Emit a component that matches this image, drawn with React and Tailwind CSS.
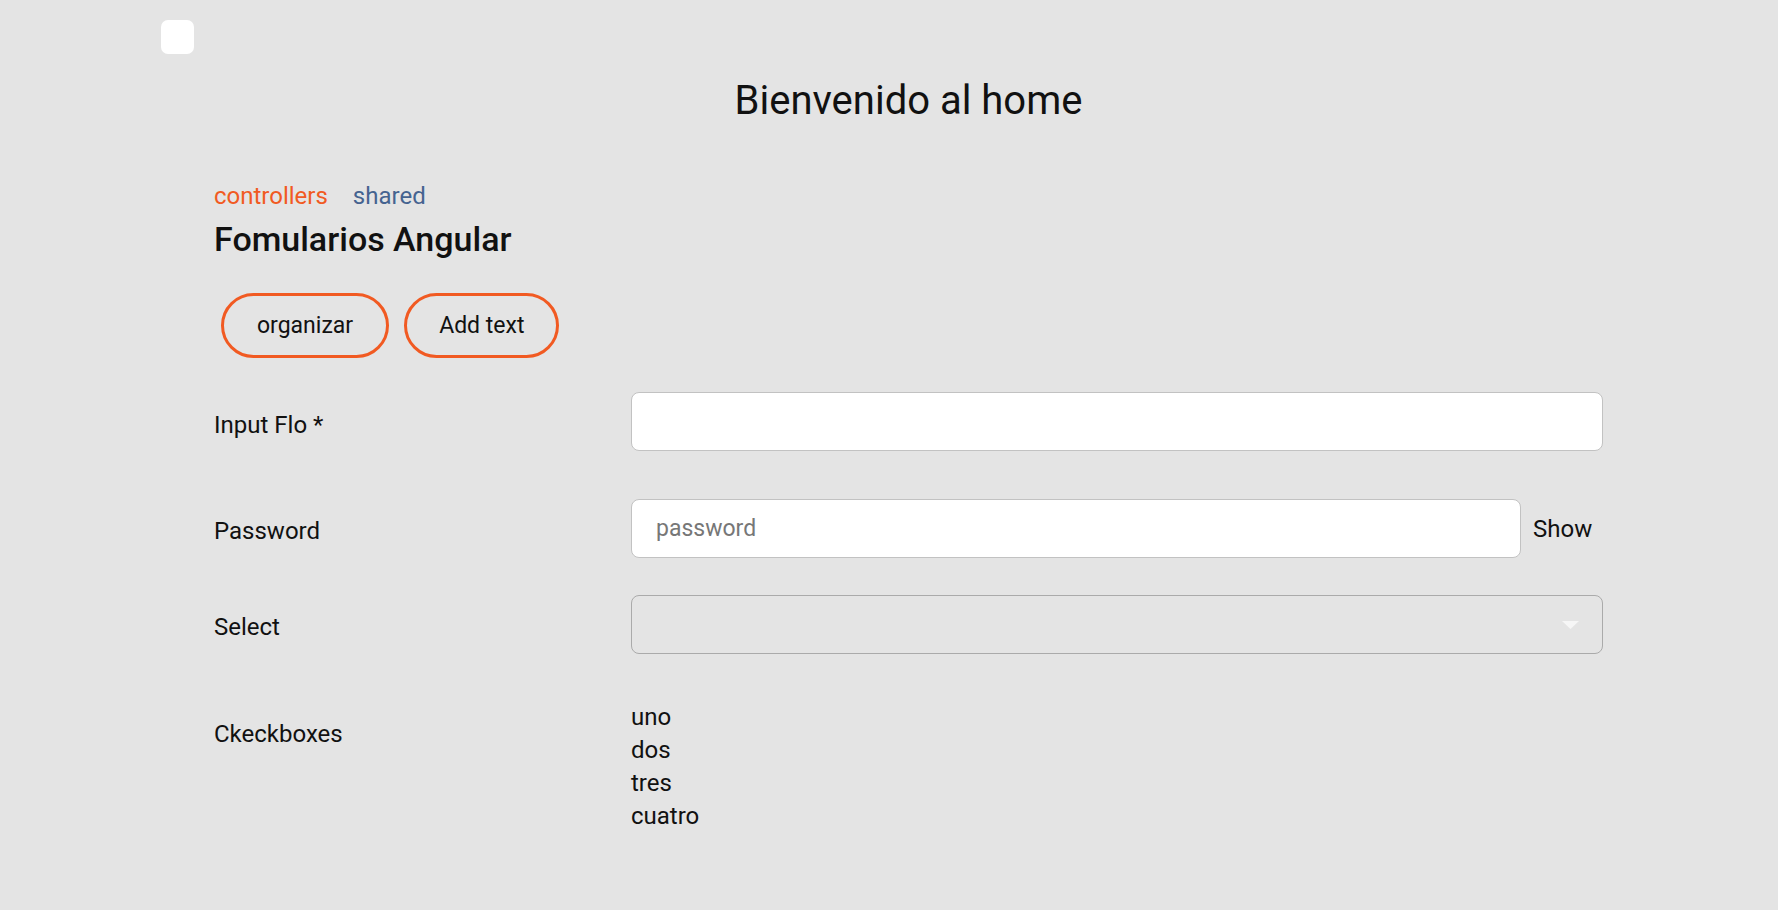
export default function App() {
  const items = ["uno", "dos", "tres", "cuatro"];
  return (
    <div className="min-h-[910px] w-full bg-[#e4e4e4] text-[#111] font-['Roboto',sans-serif]">
      <div className="pl-[161px] pt-[20px]">
        <div className="h-[34px] w-[33px] rounded-[7px] bg-white" />
      </div>
      <div className="ml-[214px] w-[1389px]">
        <h1 className="mt-[23px] text-center text-[40px] leading-[47px] font-normal">
          Bienvenido al home
        </h1>
        <div className="mt-[58px] flex gap-[25px] text-[24px] leading-[28px]">
          <a className="text-[#f15a22]">controllers</a>
          <a className="text-[#456390]">shared</a>
        </div>
        <h2 className="mt-[9px] text-[34px] leading-[40px] font-medium">Fomularios Angular</h2>
        <div className="mt-[34px] ml-[7px] flex gap-[15px]">
          <button className="h-[65px] rounded-full border-[3px] border-[#f15a22] px-[33px] text-[23px] leading-[28px]">
            organizar
          </button>
          <button className="h-[65px] rounded-full border-[3px] border-[#f15a22] px-[32px] text-[23px] leading-[28px]">
            Add text
          </button>
        </div>

        <div className="mt-[34px] flex items-start">
          <label className="mt-[19px] w-[417px] text-[24px] leading-[28px]">Input Flo *</label>
          <input className="h-[59px] flex-1 rounded-[8px] border border-[#c2c2c2] bg-white px-6 text-[24px] outline-none" />
        </div>

        <div className="mt-[48px] flex items-start">
          <label className="mt-[18px] w-[417px] text-[24px] leading-[28px]">Password</label>
          <div className="flex flex-1 items-center gap-[12px]">
            <input
              type="password"
              placeholder="password"
              className="h-[59px] w-[890px] rounded-[8px] border border-[#c2c2c2] bg-white px-6 text-[23px] outline-none placeholder:text-[#777]"
            />
            <span className="text-[24px] leading-[28px]">Show</span>
          </div>
        </div>

        <div className="mt-[37px] flex items-start">
          <label className="mt-[18px] w-[417px] text-[24px] leading-[28px]">Select</label>
          <div className="flex h-[59px] flex-1 items-center justify-end rounded-[8px] border border-[#aaaaaa] pr-[23px]">
            <svg width="17" height="8" viewBox="0 0 17 8">
              <path d="M0 0 L17 0 L8.5 8 Z" fill="#f6f6f6" />
            </svg>
          </div>
        </div>

        <div className="mt-[47px] flex items-start">
          <label className="mt-[19px] w-[417px] text-[24px] leading-[28px]">Ckeckboxes</label>
          <div className="flex flex-col text-[24px] leading-[33px]">
            {items.map((t) => (
              <span key={t}>{t}</span>
            ))}
          </div>
        </div>
      </div>
    </div>
  );
}
